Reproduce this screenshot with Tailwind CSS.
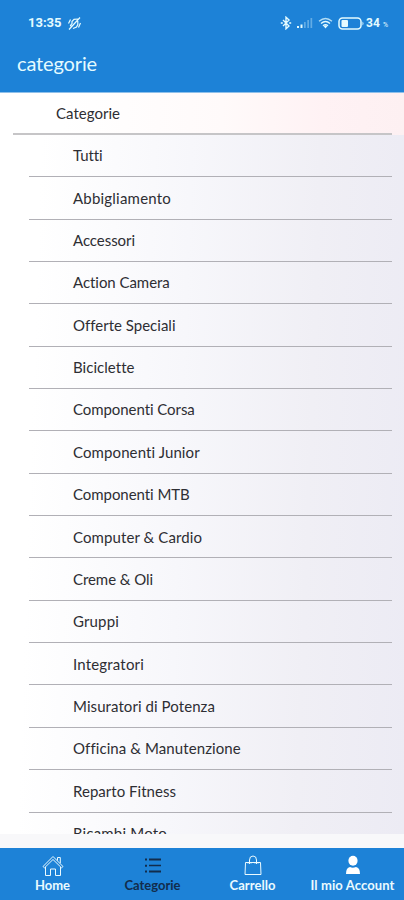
<!DOCTYPE html>
<html lang="it">
<head>
<meta charset="utf-8">
<title>categorie</title>
<script src="https://cdn.jsdelivr.net/npm/@tailwindcss/browser@4"></script>
</head>
<body class="flex h-[900px] w-[404px] flex-col overflow-hidden bg-white font-['Lato',sans-serif] text-[#2e2e33]">
<header class="h-[93px] shrink-0 border-b border-[#8fc0ea] bg-[#1d82d7] text-[#e4fbff]">
  <div class="flex h-[46px] items-center pl-7 pr-[15px] font-['Roboto',sans-serif]">
    <span class="w-[34px] whitespace-nowrap text-[13px] font-bold leading-4">13:35</span>
    <svg class="ml-[5px] size-[15px]" viewBox="0 0 15 15" fill="none" stroke="currentColor" stroke-width="1.2"><path d="M4.500 10.500 3.500 9.500 5 7.500V5.500l2-2.200 4-.3M10.800 5v3.500L9.500 11 6 12.500M2 13.500 13 1.500M1.500 7.500l2-4M13.500 7l-2 4.500"/></svg>
    <div class="ml-auto flex items-center">
      <svg class="-ml-px mr-px h-[14px] w-3 -translate-x-[3px]" viewBox="0 0 12 14" fill="none" stroke="currentColor" stroke-width="1.400"><path d="m3 4 6 6-3 2.800V1.200L9 4l-6 6M.8 7h2M9.200 7h2"/></svg>
      <svg class="ml-[1px] mr-[3px] h-3 w-4" viewBox="0 0 16 12" fill="currentColor"><path d="M0 9h2v2H0zM3.500 7.500h2V11h-2z"/><path opacity=".35" d="M7 5h1.700v6H7zM10.300 3H12v8h-1.700zM13.500 1h1.700v10h-1.700z"/></svg>
      <svg class="ml-[2px] mr-[2px] h-3 w-[15px]" viewBox="0 0 15 12" fill="none" stroke="currentColor" stroke-width="1.300"><path opacity=".75" d="M1 4.200Q7.500-1.200 14 4.200"/><path d="M3 6.500Q7.500 2.500 12 6.500M5 8.700Q7.500 6.500 10 8.700"/><path fill="currentColor" stroke="none" d="m5.500 9 2 2.500 2-2.500q-2-1.600-4 0"/></svg>
      <svg class="ml-[3px] mr-px h-[13px] w-[27px]" viewBox="0 0 27 13"><rect x="1" y="1" width="22" height="11" rx="3.500" fill="none" stroke="currentColor" stroke-width="1.500"/><rect x="3.500" y="3" width="6.500" height="7" rx="1" fill="currentColor"/><path d="M24.500 4.500q2 2 0 4z" fill="currentColor"/></svg>
      <span class="w-[16px] text-[12px] font-bold leading-4">34</span>
      <span class="ml-[1px] mt-1 w-[6px] text-[7px] leading-3">%</span>
    </div>
  </div>
  <h1 class="pl-[17px] pt-[5px] text-[20px] leading-6"><span data-w="80">categorie</span></h1>
</header>

<main class="h-[741px] shrink-0 overflow-hidden bg-[linear-gradient(92deg,#ffffff_10%,#f7f7fb_45%,#f0eff5_75%,#ecebf4_100%)] text-[15px]">
  <div class="h-[42px] bg-[linear-gradient(90deg,#ffffff_15%,#fffafa_55%,#fff2f4_80%,#fdf0f2_100%)] pl-[13px] pr-3">
    <div class="flex h-[42px] items-center border-b-2 border-[#c6c5c7] pl-[43px]"><span data-w="64">Categorie</span></div>
  </div>
  <ul id="categories" class="pl-[29px] pr-3"></ul>
</main>
<div class="h-[14px] shrink-0 bg-[#f8f8fa]"></div>

<nav class="grid h-[52px] shrink-0 grid-cols-[105px_95px_105px_95px] bg-[#1d82d7] text-[13px] font-bold leading-4 text-[#eafaff]">
  <a class="flex flex-col items-center pt-[7px]">
    <svg class="size-[22px]" viewBox="0 0 22 22" fill="none" stroke="currentColor" stroke-width="1"><path d="M1 11.500 11 1.500l10 10-1.500 1.300L11 4.500l-8.500 8.300zM3.500 12v8.500h5V14h5v6.500h5V12M15.500 5.500v-3h2.800v5.700"/></svg>
    <span data-w="35">Home</span>
  </a>
  <a class="flex flex-col items-center pt-[7px] text-[#122c4c]">
    <svg class="size-[22px]" viewBox="0 0 22 22" fill="currentColor"><path d="M3 3.500h2v2H3zM3 9.700h2v2H3zM3 15.500h2v2H3zM7 3.500h12v2H7zM7 9.700h12v1.500H7zM7 15.500h12v2H7z"/></svg>
    <span data-w="56">Categorie</span>
  </a>
  <a class="flex flex-col items-center pt-[7px]">
    <svg class="size-[22px]" viewBox="0 0 22 22" fill="none" stroke="currentColor" stroke-width="1"><path d="M3.500 7.500h15l.5 12H3zM7.500 9V5q0-4 3.500-4t3.500 4v4M6 8.500l1.500-2L9 8.500M13 8.500l1.500-2 1.500 2"/></svg>
    <span data-w="46">Carrello</span>
  </a>
  <a class="flex flex-col items-center pt-[7px]">
    <svg class="size-[22px]" viewBox="0 0 22 22" fill="#fff"><ellipse cx="11" cy="5.800" rx="4.600" ry="5"/><path d="M4 19q0-6.500 4-7 2.500 1.300 6 0 4 .5 4 7z"/></svg>
    <span data-w="84" class="whitespace-nowrap">Il mio Account</span>
  </a>
</nav>

<script>
const categories = [
  ["Tutti", 29], ["Abbigliamento", 98], ["Accessori", 62], ["Action Camera", 97],
  ["Offerte Speciali", 102], ["Biciclette", 61], ["Componenti Corsa", 122],
  ["Componenti Junior", 127], ["Componenti MTB", 117], ["Computer & Cardio", 129],
  ["Creme & Oli", 80], ["Gruppi", 46], ["Integratori", 71], ["Misuratori di Potenza", 142],
  ["Officina & Manutenzione", 167], ["Reparto Fitness", 103], ["Ricambi Moto", 94]
];
const list = document.getElementById("categories");
for (const [name, width] of categories) {
  const row = document.createElement("li");
  row.className = "flex h-[42.35px] items-center border-b border-[#b1b0b6] pl-[44px]";
  const label = document.createElement("span");
  label.className = "whitespace-nowrap";
  label.dataset.w = width;
  label.textContent = name;
  row.append(label);
  list.append(row);
}
// Distribute tracking so each label fills its intended width.
function fitLabels() {
  for (const label of document.querySelectorAll("[data-w]")) {
    label.style.letterSpacing = "0px";
    const measured = label.getBoundingClientRect().width;
    label.style.letterSpacing = (label.dataset.w - measured) / label.textContent.length + "px";
  }
}
window.addEventListener("load", fitLabels);
</script>
</body>
</html>
